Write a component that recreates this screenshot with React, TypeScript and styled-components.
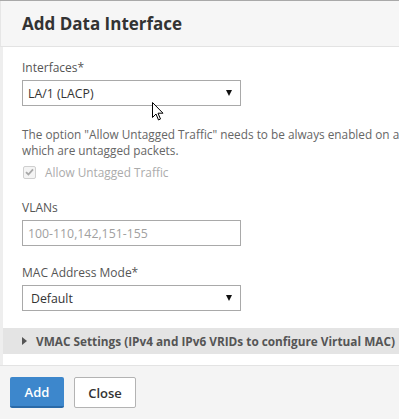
import React from "react";
import styled, { createGlobalStyle } from "styled-components";

const Global = createGlobalStyle`
  html, body { margin: 0; padding: 0; background: #ffffff; }
  body { font-family: "Open Sans", "Noto Sans", sans-serif; }
  #root { width: 399px; height: 419px; overflow: hidden; }
`;

const Dialog = styled.div`
  position: relative;
  width: 399px;
  height: 419px;
  display: flex;
  flex-direction: column;
  border-top: 1px solid #a9a9a9;
  box-sizing: border-box;
  overflow: hidden;
  background: #fff;
`;

const Header = styled.div`
  height: 46px;
  flex: none;
  background: #f6f6f6;
  border-bottom: 1px solid #e3e3e3;
  border-left: 1px solid #e6e6e6;
  display: flex;
  align-items: center;
  padding-left: 21px;
  box-sizing: border-box;
`;

const Title = styled.h1`
  margin: 0;
  font-size: 17px;
  font-weight: 700;
  color: #333;
`;

const Body = styled.div`
  flex: 1;
  border-left: 3px solid #eeeeee;
  display: flex;
  flex-direction: column;
  padding-top: 13px;
`;

const Content = styled.div`
  padding-left: 19px;
  display: flex;
  flex-direction: column;
`;

const Label = styled.div`
  font-size: 12px;
  color: #555;
  line-height: 16px;
  margin-bottom: 4px;
`;

const Field = styled.div<{ $gap?: number }>`
  margin-bottom: ${(p) => p.$gap ?? 0}px;
`;

const Box = styled.div<{ $pad?: number }>`
  width: 219px;
  height: 26px;
  box-sizing: border-box;
  border: 1px solid #a9a9a9;
  display: flex;
  align-items: center;
  justify-content: space-between;
  padding: 0 8px 0 ${(p) => p.$pad ?? 5}px;
  font-size: 12.3px;
  color: #333;
  background: #fff;
`;

const Placeholder = styled.span`
  color: #a0a0a0;
`;

const Arrow = styled.span`
  width: 0;
  height: 0;
  border-left: 3.5px solid transparent;
  border-right: 3.5px solid transparent;
  border-top: 6px solid #111;
`;

const Note = styled.p`
  margin: 0 0 6px 0;
  font-size: 11.8px;
  line-height: 16px;
  color: #666;
  white-space: nowrap;
`;

const CheckRow = styled.div`
  display: flex;
  align-items: center;
  gap: 9px;
  margin-left: 1px;
  margin-bottom: 20px;
`;

const CheckBox = styled.span`
  width: 13px;
  height: 13px;
  box-sizing: border-box;
  border: 1px solid #cfcfcf;
  border-radius: 2px;
  background: #f4f4f4;
  display: flex;
  align-items: center;
  justify-content: center;
`;

const CheckLabel = styled.span`
  font-size: 11.8px;
  color: #ababab;
`;

const Section = styled.div`
  margin-top: 17px;
  height: 26px;
  background: #e4e4e4;
  display: flex;
  align-items: center;
  padding-left: 19px;
  gap: 9px;
  font-size: 11.8px;
  font-weight: 700;
  color: #555;
  white-space: nowrap;
`;

const Caret = styled.span`
  width: 0;
  height: 0;
  border-top: 4px solid transparent;
  border-bottom: 4px solid transparent;
  border-left: 5px solid #555;
`;

const Footer = styled.div`
  height: 54px;
  flex: none;
  border-top: 1px solid #e3e3e3;
  background: #f4f4f4;
  display: flex;
  align-items: flex-start;
  gap: 10px;
  padding: 11px 0 0 10px;
  box-sizing: border-box;
`;

const Button = styled.button<{ $primary?: boolean }>`
  height: 31px;
  box-sizing: border-box;
  border-radius: 2px;
  font-family: inherit;
  font-size: 13px;
  font-weight: 600;
  padding: 0;
  cursor: pointer;
  ${(p) =>
    p.$primary
      ? `width: 54px; background: #3d87cc; color: #fff; border: none; border-bottom: 2px solid #2a6aa8;`
      : `width: 62px; background: #fff; color: #333; border: 1px solid #b3b3b3;`}
`;

const Cursor = styled.svg`
  position: absolute;
  left: 152px;
  top: 101px;
`;

export default function App() {
  return (
    <>
      <Global />
      <Dialog>
        <Header>
          <Title>Add Data Interface</Title>
        </Header>
        <Body>
          <Content>
            <Field $gap={20}>
              <Label>Interfaces*</Label>
              <Box>
                <span>LA/1 (LACP)</span>
                <Arrow />
              </Box>
            </Field>
            <Note>
              The option "Allow Untagged Traffic" needs to be always enabled on any interface through
              <br />
              which are untagged packets.
            </Note>
            <CheckRow>
              <CheckBox>
                <svg width="9" height="8" viewBox="0 0 9 8">
                  <path d="M1 4.2 L3.4 6.5 L8 1.3" fill="none" stroke="#a8a8a8" strokeWidth="1.8" />
                </svg>
              </CheckBox>
              <CheckLabel>Allow Untagged Traffic</CheckLabel>
            </CheckRow>
            <Field $gap={19}>
              <Label>VLANs</Label>
              <Box>
                <Placeholder>100-110,142,151-155</Placeholder>
              </Box>
            </Field>
            <Field>
              <Label>MAC Address Mode*</Label>
              <Box $pad={8}>
                <span>Default</span>
                <Arrow />
              </Box>
            </Field>
          </Content>
          <Section>
            <Caret />
            <span>VMAC Settings (IPv4 and IPv6 VRIDs to configure Virtual MAC)</span>
          </Section>
        </Body>
        <Footer>
          <Button $primary>Add</Button>
          <Button>Close</Button>
        </Footer>
        <Cursor width="12" height="19" viewBox="0 0 12 19">
          <path d="M0.5 0.5 L0.5 15.5 L4 12 L6.5 18 L8.5 17 L6 11.2 L11 11.2 Z" fill="#fff" stroke="#000" strokeWidth="1" />
        </Cursor>
      </Dialog>
    </>
  );
}
